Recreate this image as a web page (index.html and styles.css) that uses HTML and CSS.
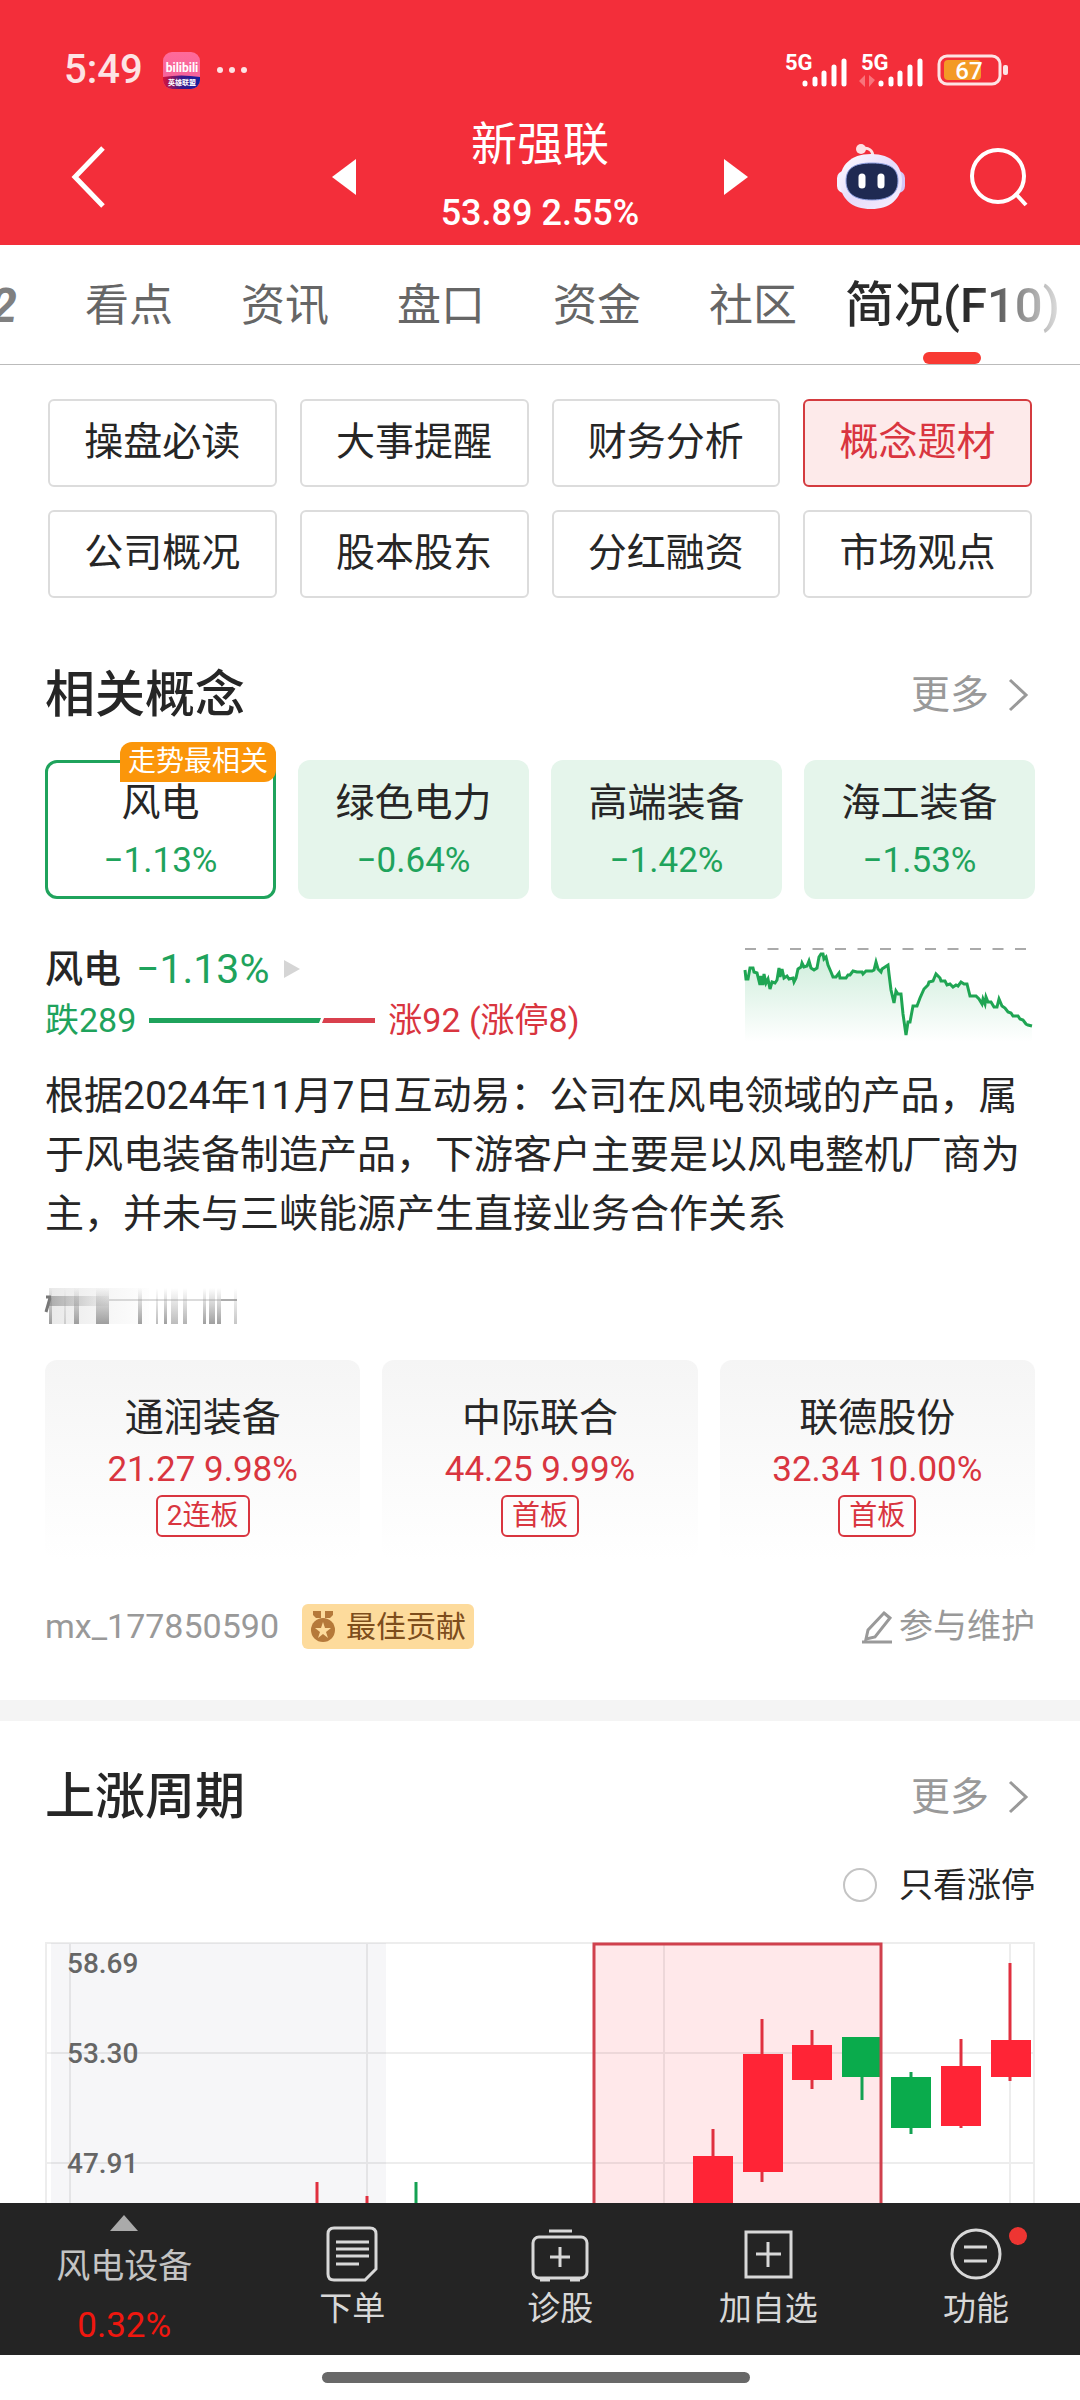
FILE: index.html
```html
<!DOCTYPE html>
<html lang="zh-CN">
<head>
  <meta charset="UTF-8" />
  <meta name="viewport" content="width=device-width, initial-scale=1" />
  <title>新强联 - 简况(F10)</title>
  <link rel="stylesheet" href="styles.css">
</head>
<body>
  <div class="app">
    <header class="header">
      <div class="status-bar">
        <span class="clock">5:49</span>
        <svg class="app-icon" width="37" height="37" viewBox="0 0 37 37">
          <defs>
            <linearGradient id="pink" x1="0" y1="0" x2="0" y2="1"><stop offset="0" stop-color="#ff6a9a" /><stop offset="1" stop-color="#f0609c" /></linearGradient>
            <linearGradient id="strip" x1="0" y1="0" x2="1" y2="0"><stop offset="0" stop-color="#d8123a" /><stop offset=".5" stop-color="#3b1a8a" /><stop offset="1" stop-color="#1420a0" /></linearGradient>
            <clipPath id="app-clip"><rect width="37" height="37" rx="9" /></clipPath>
          </defs>
          <g clip-path="url(#app-clip)">
            <rect width="37" height="37" fill="url(#pink)" />
            <path d="M0 25q18-3 37 0v12H0z" fill="url(#strip)" />
            <text x="19" y="20" text-anchor="middle" class="app-name">bilibili</text>
            <text x="19" y="33" text-anchor="middle" class="app-sub">英雄联盟</text>
          </g>
        </svg>
        <svg class="dots" width="32" height="8" viewBox="0 0 32 8" fill="#fde3e4"><circle cx="4" cy="4" r="3" /><circle cx="16" cy="4" r="3" /><circle cx="28" cy="4" r="3" /></svg>
        <div class="status-right">
          <svg width="62" height="36" viewBox="0 0 62 36">
            <text x="0" y="18" class="net">5G</text>
            <g stroke="#fff" stroke-width="5" stroke-linecap="round"><path d="M20 31v1M30 27v5M39 21v11M49 15v17M59 9v23" /></g>
          </svg>
          <svg width="62" height="36" viewBox="0 0 62 36">
            <text x="0" y="18" class="net">5G</text>
            <path d="M-2 29l6-6v12zM8 23v12l6-7z" fill="#f8747b" />
            <g stroke="#fff" stroke-width="5" stroke-linecap="round"><path d="M20 31v1M30 27v5M39 21v11M49 15v17M59 9v23" /></g>
          </svg>
          <svg width="72" height="32" viewBox="0 0 72 32">
            <rect x="2" y="2" width="61" height="28" rx="8" fill="none" stroke="#fde3e4" stroke-width="3" />
            <rect x="7" y="6" width="37" height="20" rx="4" fill="#f39a26" />
            <rect x="66" y="11" width="5" height="10" rx="2" fill="#fde3e4" />
            <text x="32" y="25" text-anchor="middle" class="battery">67</text>
          </svg>
        </div>
      </div>
      <div class="title-bar">
        <button class="icon-btn back" aria-label="返回">
          <svg width="33" height="62" viewBox="0 0 33 62" fill="none" stroke="#fff" stroke-width="5"><path d="M31 2L3 31l28 29" /></svg>
        </button>
        <div class="stock-switch">
          <button class="icon-btn" aria-label="上一只"><svg width="24" height="36" viewBox="0 0 24 36" fill="#fff"><path d="M24 0v36L0 18z" /></svg></button>
          <div class="stock-title">
            <h1>新强联</h1>
            <p>53.89 2.55%</p>
          </div>
          <button class="icon-btn" aria-label="下一只"><svg width="24" height="36" viewBox="0 0 24 36" fill="#fff"><path d="M0 0v36l24-18z" /></svg></button>
        </div>
        <div class="title-actions">
          <button class="icon-btn" aria-label="智能助手">
            <svg width="70" height="66" viewBox="0 0 70 66">
              <defs><linearGradient id="shell" x1="0" y1="0" x2="1" y2="1"><stop offset="0" stop-color="#fff" /><stop offset=".5" stop-color="#e6dcfb" /><stop offset="1" stop-color="#f6f0ff" /></linearGradient></defs>
              <path d="M26 5c6-2 11 1 11 8" fill="none" stroke="#fde3e4" stroke-width="3" />
              <circle cx="25" cy="5" r="5" fill="#fde0e3" />
              <rect x="1" y="27" width="14" height="22" rx="7" fill="#f4f0ff" />
              <rect x="55" y="27" width="14" height="22" rx="7" fill="#d3c6f7" />
              <path d="M35 10c21 0 31 12 31 27 0 18-12 28-31 28S4 55 4 37c0-15 10-27 31-27z" fill="url(#shell)" />
              <path d="M36 19c19 0 26 6 26 18s-8 19-26 19-26-7-26-19 7-18 26-18z" fill="#1f2a52" stroke="#8fa0e0" stroke-width="1" />
              <path d="M26 33v8M45 33v8" stroke="#fff" stroke-width="7" stroke-linecap="round" />
            </svg>
          </button>
          <button class="icon-btn" aria-label="搜索">
            <svg width="58" height="58" viewBox="0 0 58 58" fill="none" stroke="#fff" stroke-width="4"><circle cx="28" cy="28" r="26" /><path d="M45 45l11 12" /></svg>
          </button>
        </div>
      </div>
    </header>

    <nav class="tabs">
      <a href="#" class="tab tab-cut">L2</a>
      <a href="#" class="tab">看点</a>
      <a href="#" class="tab">资讯</a>
      <a href="#" class="tab">盘口</a>
      <a href="#" class="tab">资金</a>
      <a href="#" class="tab">社区</a>
      <a href="#" class="tab active"><span>简况(F10)</span></a>
    </nav>

    <main class="content">
      <div class="sub-nav">
        <button>操盘必读</button>
        <button>大事提醒</button>
        <button>财务分析</button>
        <button class="selected">概念题材</button>
        <button>公司概况</button>
        <button>股本股东</button>
        <button>分红融资</button>
        <button>市场观点</button>
      </div>

      <section class="section concepts">
        <div class="section-head">
          <h2>相关概念</h2>
          <a href="#" class="more">更多
            <svg width="22" height="32" viewBox="0 0 22 32" fill="none" stroke="#999" stroke-width="3"><path d="M3 1l16 15L3 31" /></svg>
          </a>
        </div>

        <div class="concept-list">
          <button class="concept current"><span class="badge">走势最相关</span><span>风电</span><span class="pct">−1.13%</span></button>
          <button class="concept"><span>绿色电力</span><span class="pct">−0.64%</span></button>
          <button class="concept"><span>高端装备</span><span class="pct">−1.42%</span></button>
          <button class="concept"><span>海工装备</span><span class="pct">−1.53%</span></button>
        </div>

        <div class="detail">
          <div>
            <div class="detail-name">
              <strong>风电</strong><span class="pct">−1.13%</span>
              <svg width="16" height="18" viewBox="0 0 16 18" fill="#d5d5d5"><path d="M0 0v18l16-9z" /></svg>
            </div>
            <div class="ratio">
              <span class="down">跌289</span>
              <svg width="226" height="5" viewBox="0 0 226 5"><path d="M0 0h172l-2 5H0z" fill="#1fa35c" /><path d="M175 0h51v5h-53z" fill="#d9404d" /></svg>
              <span class="up">涨92 (涨停8)</span>
            </div>
          </div>
          <svg class="spark" width="290" height="96" viewBox="0 0 290 96">
            <defs><linearGradient id="fade" x1="0" y1="0" x2="0" y2="1"><stop offset="0" stop-color="#1fae5c" stop-opacity=".22" /><stop offset="1" stop-color="#1fae5c" stop-opacity="0" /></linearGradient></defs>
            <path d="M0 3h290" stroke="#aaa" stroke-width="2" stroke-dasharray="11 11.5" />
            <path d="M0 24l1 9 2 0 2-11 3 0 1 4 3 1 3 12 1-9 2 9 1-11 2 9 2-4 2 10 2-7 3 1 2-3 2-12 1 9 2-8 2 9 3-2 2 3 4-1 1 4 2-4 2-9 3-2 1-4 2 4 3-1 2-5 2 7 3 2 3-2 2-11 2-3 2 0 1 5 2-2 2 8 3 7 2 5 3 0 3-4 1 5 6 0 2-3 2 0 3-4 4 1 5 0 1 2 3-3 6 0 2-1 2-8 2 7 3 3 1-3 6-4 1 9 2 16 3 13 2-12 2 3 3 0 2 20 3 21 2-13 2 0 3-16 4 0 3-8 4-9 4-4 1-3 4-1 3-7 4 4 1 3 4 0 2 4 3-1 3 3 3-2 2 1 3-4 3 2 3 0 3 12 6 0 3 3 3 5 1-5 2 5 1-7 2 5 3 0 3 5 3 0 2-8 3 7 3 2 3 4 3 1 2 3 5 0 2 3 3 1 3 4 2 1 4 1V96H0z" fill="url(#fade)" />
            <path d="M0 24l1 9 2 0 2-11 3 0 1 4 3 1 3 12 1-9 2 9 1-11 2 9 2-4 2 10 2-7 3 1 2-3 2-12 1 9 2-8 2 9 3-2 2 3 4-1 1 4 2-4 2-9 3-2 1-4 2 4 3-1 2-5 2 7 3 2 3-2 2-11 2-3 2 0 1 5 2-2 2 8 3 7 2 5 3 0 3-4 1 5 6 0 2-3 2 0 3-4 4 1 5 0 1 2 3-3 6 0 2-1 2-8 2 7 3 3 1-3 6-4 1 9 2 16 3 13 2-12 2 3 3 0 2 20 3 21 2-13 2 0 3-16 4 0 3-8 4-9 4-4 1-3 4-1 3-7 4 4 1 3 4 0 2 4 3-1 3 3 3-2 2 1 3-4 3 2 3 0 3 12 6 0 3 3 3 5 1-5 2 5 1-7 2 5 3 0 3 5 3 0 2-8 3 7 3 2 3 4 3 1 2 3 5 0 2 3 3 1 3 4 2 1 4 1" fill="none" stroke="#1fa553" stroke-width="3" />
          </svg>
        </div>

        <p class="reason">根据2024年11月7日互动易：公司在风电领域的产品，属于风电装备制造产品，下游客户主要是以风电整机厂商为主，并未与三峡能源产生直接业务合作关系</p>

        <!-- smeared line above the related stocks -->
        <svg class="smear" width="194" height="40" viewBox="0 0 194 40">
          <defs>
            <linearGradient id="bar" x1="0" y1="0" x2="0" y2="1"><stop offset="0" stop-color="#888" stop-opacity="0" /><stop offset="1" stop-color="#888" stop-opacity=".8" /></linearGradient>
            <linearGradient id="side" x1="0" y1="0" x2="1" y2="0"><stop offset="0" stop-color="#777" stop-opacity=".55" /><stop offset="1" stop-color="#999" stop-opacity=".05" /></linearGradient>
          </defs>
          <path d="M1 11h5M5 12l-4 14" stroke="#777" stroke-width="3" fill="none" />
          <rect x="4" y="2" width="100" height="36" fill="url(#side)" opacity=".3" />
          <rect x="4" y="10" width="60" height="10" fill="url(#side)" />
          <path d="M64 14h128" stroke="#999" stroke-width="2" opacity=".35" />
          <path d="M176 14h16" stroke="#999" stroke-width="2" opacity=".7" />
          <g fill="url(#bar)">
            <rect x="4" y="2" width="3" height="36" /><rect x="19" y="2" width="2" height="36" opacity=".4" /><rect x="29" y="2" width="5" height="36" />
            <rect x="51" y="2" width="13" height="36" /><rect x="93" y="2" width="4" height="36" /><rect x="111" y="2" width="2" height="36" opacity=".7" />
            <rect x="119" y="2" width="3" height="36" /><rect x="126" y="2" width="7" height="36" opacity=".7" /><rect x="138" y="2" width="4" height="36" opacity=".8" />
            <rect x="158" y="2" width="3" height="36" /><rect x="164" y="2" width="6" height="36" /><rect x="172" y="2" width="4" height="36" /><rect x="189" y="2" width="3" height="36" opacity=".6" />
          </g>
        </svg>

        <div class="stock-list">
          <a href="#" class="stock"><span>通润装备</span><span class="price">21.27 9.98%</span><span class="tag">2连板</span></a>
          <a href="#" class="stock"><span>中际联合</span><span class="price">44.25 9.99%</span><span class="tag">首板</span></a>
          <a href="#" class="stock"><span>联德股份</span><span class="price">32.34 10.00%</span><span class="tag">首板</span></a>
        </div>

        <div class="contributor">
          <span>mx_177850590</span>
          <span class="medal">
            <svg width="26" height="32" viewBox="0 0 26 32" fill="#b5793a"><path d="M3 0h8v7H6L3 4zM15 0h8v4l-3 3h-5z" /><circle cx="13" cy="19" r="12" /><path d="M13 11l2 6h6l-5 4 2 6-5-4-5 4 2-6-5-4h6z" fill="#fddb9c" /></svg>
            最佳贡献
          </span>
          <a href="#" class="edit">
            <svg width="32" height="34" viewBox="0 0 32 34" fill="none" stroke="#999" stroke-width="3"><path d="M23 3l6 5-15 19-9 2 2-9zM1 32h30" /></svg>
            参与维护
          </a>
        </div>
      </section>

      <section class="section cycle">
        <div class="section-head">
          <h2>上涨周期</h2>
          <a href="#" class="more">更多
            <svg width="22" height="32" viewBox="0 0 22 32" fill="none" stroke="#999" stroke-width="3"><path d="M3 1l16 15L3 31" /></svg>
          </a>
        </div>
        <label class="only-limit"><input type="radio" name="limit" />只看涨停</label>

        <svg class="kline" viewBox="0 0 990 330">
          <rect x="6" y="1" width="335" height="329" fill="#f6f6f8" />
          <rect x="549" y="1" width="287" height="340" fill="#ffe8ea" />
          <path d="M0 1h990M0 111h990M0 221h990M1 0v330M25 0v330M322 0v330M619 0v330M965 0v330M989 0v330" stroke="#000" stroke-opacity=".07" stroke-width="2" />
          <g stroke="#e0303f" stroke-width="3">
            <path d="M272 240v90M322 254v76M668 187v140M717 77v163M767 88v59M916 97v89M965 21v118" />
          </g>
          <path d="M371 240v90M817 95v63M866 130v62" stroke="#14a152" stroke-width="3" />
          <g fill="#ff2436">
            <rect x="648" y="214" width="40" height="116" />
            <rect x="698" y="112" width="40" height="118" />
            <rect x="747" y="103" width="40" height="35" />
            <rect x="896" y="124" width="40" height="60" />
            <rect x="946" y="98" width="40" height="37" />
          </g>
          <g fill="#0aab4c">
            <rect x="797" y="95" width="40" height="40" />
            <rect x="846" y="135" width="40" height="51" />
          </g>
          <path d="M549 341V2h287v339" fill="none" stroke="#d0404d" stroke-width="3" />
          <g class="axis">
            <text x="22" y="31">58.69</text>
            <text x="22" y="121">53.30</text>
            <text x="22" y="231">47.91</text>
          </g>
        </svg>
      </section>
    </main>

    <nav class="bottom-nav">
      <a href="#" class="sector">
        <svg width="28" height="16" viewBox="0 0 28 16" fill="#aaa"><path d="M14 0l14 16H0z" /></svg>
        <span>风电设备</span>
        <span class="gain">0.32%</span>
      </a>
      <a href="#" class="nav-item">
        <svg width="60" height="56" viewBox="0 0 60 56" fill="none" stroke="#d8d8d8" stroke-width="3"><path d="M12 2h36q6 0 6 6v35L43 54H12q-6 0-6-6V8q0-6 6-6zM14 16h33M14 23h33M14 30h33M14 38h23" /></svg>
        下单
      </a>
      <a href="#" class="nav-item">
        <svg width="60" height="56" viewBox="0 0 60 56" fill="none" stroke="#d8d8d8" stroke-width="3"><path d="M19 5h23" /><rect x="3" y="11" width="54" height="41" rx="6" /><path d="M10 54h10M40 54h10M30 21v20M20 31h20" /></svg>
        诊股
      </a>
      <a href="#" class="nav-item">
        <svg width="60" height="56" viewBox="0 0 60 56" fill="none" stroke="#d8d8d8" stroke-width="3"><path d="M8 6h45v45H8zM30 16v25M18 28h25" /></svg>
        加自选
      </a>
      <a href="#" class="nav-item">
        <svg width="60" height="56" viewBox="0 0 60 56" fill="none" stroke="#d8d8d8" stroke-width="3"><circle cx="30" cy="28" r="24" /><path d="M18 21h23M18 35h23" /></svg>
        功能
        <i class="dot"></i>
      </a>
    </nav>
    <div class="gesture"><span></span></div>
  </div>
</body>
</html>
```
FILE: styles.css
```css
:root {
  --brand: #f32e3a;
  --up: #d9353f;
  --down: #1fa35c;
  --text: #262626;
  --muted: #999;
  --edge: 45px;
}

* {
  box-sizing: border-box;
}

body {
  margin: 0;
  background: #fff;
  color: var(--text);
  font-family: Roboto, "Noto Sans CJK SC", sans-serif;
}

h1, h2, p {
  margin: 0;
}

a {
  color: inherit;
  text-decoration: none;
}

button {
  padding: 0;
  border: none;
  background: none;
  color: inherit;
  font-family: inherit;
  cursor: pointer;
}

svg {
  display: block;
  overflow: visible;
}

.app {
  height: 100vh;
  display: flex;
  flex-direction: column;
}

/* header */
.header {
  background: var(--brand);
  color: #fff;
}

.status-bar {
  display: flex;
  align-items: center;
  height: 90px;
  padding: 50px 71px 0 64px;
}

.clock {
  font-size: 40px;
  font-weight: 500;
  line-height: 40px;
  color: #fde3e4;
}

.app-icon {
  margin-left: 20px;
}

.app-name {
  font-size: 12px;
  font-weight: 700;
  fill: #fff;
}

.app-sub {
  font-size: 7px;
  font-weight: 700;
  fill: #fff;
}

.dots {
  margin-left: 16px;
}

.status-right {
  display: flex;
  align-items: center;
  gap: 14px;
  margin-left: auto;
}

.net {
  font-size: 22px;
  font-weight: 700;
  fill: #fff;
}

.battery {
  font-size: 24px;
  font-weight: 500;
  fill: #fff;
}

.title-bar {
  display: grid;
  grid-template-columns: 1fr 416px 1fr;
  align-items: center;
  height: 155px;
  padding-top: 18px;
}

.back {
  justify-self: start;
  margin-left: 72px;
}

.stock-switch {
  display: flex;
  align-items: center;
  justify-content: space-between;
}

.stock-title {
  text-align: center;
}

.stock-title h1 {
  font-size: 46px;
  font-weight: 400;
  line-height: 72px;
}

.stock-title p {
  font-size: 36px;
  font-weight: 500;
  line-height: 66px;
}

.title-actions {
  display: flex;
  align-items: center;
  justify-content: flex-end;
  gap: 64px;
  padding-right: 52px;
}

/* tabs */
.tabs {
  display: flex;
  flex: none;
  align-items: center;
  height: 120px;
  padding-top: 2px;
  border-bottom: 1px solid #bbb;
  font-size: 44px;
  line-height: 64px;
  color: #666;
  overflow: hidden;
}

.tab {
  flex: none;
  margin-right: 68px;
}

.tab-cut {
  display: flex;
  justify-content: flex-end;
  width: 17px;
  overflow: hidden;
  font-size: 48px;
  font-style: italic;
  font-weight: 700;
  color: #808080;
}

.tab:nth-last-child(2) {
  margin-right: 48px;
}

.tab.active {
  position: relative;
  margin-right: 0;
  font-size: 49px;
  font-weight: 500;
}

.tab.active span {
  background: linear-gradient(90deg, #2b2b2b 60%, #e0e0e0);
  -webkit-background-clip: text;
  background-clip: text;
  color: transparent;
}

.tab.active::after {
  content: "";
  position: absolute;
  left: 50%;
  bottom: -26px;
  width: 58px;
  height: 12px;
  margin-left: -29px;
  border-radius: 6px;
  background: #f83a33;
}

/* content */
.content {
  flex: 1;
  min-height: 0;
  overflow: hidden;
}

.sub-nav {
  display: grid;
  grid-template-columns: repeat(4, 1fr);
  gap: 23px;
  padding: 34px 48px 0;
}

.sub-nav button {
  height: 88px;
  padding-bottom: 10px;
  border: 2px solid #dcdcdc;
  border-radius: 6px;
  font-size: 39px;
}

.sub-nav .selected {
  border-color: #d43b3f;
  background: #fdeaea;
  color: var(--up);
}

.section {
  padding: 62px var(--edge) 51px;
}

.section-head {
  display: flex;
  align-items: center;
  justify-content: space-between;
  line-height: 70px;
}

.section-head h2 {
  font-size: 50px;
  font-weight: 500;
}

.more {
  display: flex;
  align-items: center;
  gap: 18px;
  padding-right: 6px;
  font-size: 39px;
  color: var(--muted);
}

.concept-list {
  display: grid;
  grid-template-columns: repeat(4, 1fr);
  gap: 22px;
  margin-top: 30px;
}

.concept {
  position: relative;
  display: flex;
  flex-direction: column;
  align-items: center;
  height: 139px;
  padding-top: 14px;
  border-radius: 12px;
  background: #e5f5eb;
  font-size: 39px;
  line-height: 58px;
}

.concept .pct {
  font-size: 35px;
}

.concept.current {
  padding-top: 11px;
  border: 3px solid var(--down);
  background: #fff;
}

.badge {
  position: absolute;
  top: -21px;
  right: -3px;
  padding: 0 8px;
  border-radius: 12px 12px 12px 0;
  background: #fb960a;
  color: #fff;
  font-size: 28px;
  line-height: 40px;
}

.pct {
  color: var(--down);
}

.detail {
  display: flex;
  justify-content: space-between;
  margin-top: 44px;
}

.detail-name {
  display: flex;
  align-items: center;
  gap: 15px;
  font-size: 41px;
  line-height: 52px;
}

.detail-name strong {
  font-size: 38px;
  font-weight: 500;
}

.ratio {
  display: flex;
  align-items: center;
  gap: 13px;
  font-size: 34px;
  line-height: 50px;
}

.down {
  color: var(--down);
}

.up {
  color: var(--up);
}

.spark {
  margin-top: 3px;
}

.reason {
  margin-top: 22px;
  font-size: 39px;
  line-height: 59px;
}

.smear {
  margin-top: 42px;
}

.stock-list {
  display: grid;
  grid-template-columns: repeat(3, 1fr);
  gap: 22px;
  margin-top: 34px;
}

.stock {
  display: flex;
  flex-direction: column;
  align-items: center;
  height: 200px;
  padding-top: 31px;
  border-radius: 12px;
  background: linear-gradient(#f5f5f5, #fff);
  font-size: 39px;
  line-height: 54px;
}

.price {
  color: var(--up);
  font-size: 35px;
  line-height: 50px;
}

.tag {
  padding: 0 9px;
  border: 2px solid var(--up);
  border-radius: 6px;
  color: var(--up);
  font-size: 28px;
  line-height: 38px;
}

.contributor {
  display: flex;
  align-items: center;
  margin-top: 44px;
  font-size: 34px;
  line-height: 45px;
  color: var(--muted);
}

.medal {
  display: flex;
  align-items: center;
  gap: 10px;
  margin-left: 23px;
  padding: 0 8px;
  border-radius: 6px;
  background: #fddb9c;
  color: #7d4d1c;
  font-size: 30px;
}

.edit {
  display: flex;
  align-items: center;
  gap: 6px;
  margin-left: auto;
}

.cycle {
  padding-top: 41px;
  border-top: 21px solid #f4f4f4;
}

.only-limit {
  display: flex;
  align-items: center;
  justify-content: flex-end;
  gap: 22px;
  margin-top: 28px;
  font-size: 34px;
  line-height: 50px;
}

.only-limit input {
  appearance: none;
  width: 34px;
  height: 34px;
  margin: 0;
  border: 2px solid #c4c4c4;
  border-radius: 50%;
}

.only-limit input:checked {
  border: 10px solid var(--brand);
}

.kline {
  width: 100%;
  margin-top: 32px;
}

.axis {
  font-size: 28px;
  font-weight: 500;
  fill: #666;
}

/* bottom bar */
.bottom-nav {
  display: flex;
  height: 152px;
  background: #242424;
  color: #d8d8d8;
}

.sector {
  display: flex;
  flex-direction: column;
  align-items: center;
  width: 23%;
  padding-top: 12px;
  font-size: 34px;
  line-height: 59px;
  color: #c4c4c4;
}

.sector span:first-of-type {
  margin-top: 6px;
}

.gain {
  color: #f0170f;
  font-size: 35px;
}

.nav-item {
  position: relative;
  flex: 1;
  display: flex;
  flex-direction: column;
  align-items: center;
  padding-top: 23px;
  font-size: 33px;
  line-height: 54px;
}

.dot {
  position: absolute;
  top: 24px;
  left: 50%;
  width: 18px;
  height: 18px;
  margin-left: 33px;
  border-radius: 50%;
  background: #ee3532;
}

.gesture {
  display: flex;
  justify-content: center;
  height: 45px;
  padding: 17px 8px 0 0;
}

.gesture span {
  width: 40%;
  height: 11px;
  border-radius: 6px;
  background: #686868;
}
```
